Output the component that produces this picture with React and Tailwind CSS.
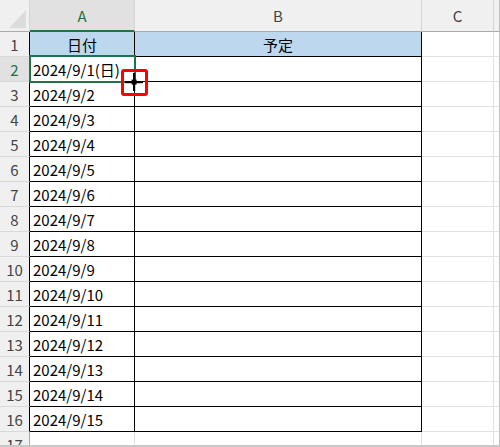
import React from 'react';

const rows = [
  '日付',
  '2024/9/1(日)',
  ...Array.from({ length: 14 }, (_, i) => `2024/9/${i + 2}`),
  '',
];

const FillCursor = () => (
  <svg width="22" height="22" viewBox="-11 -11 22 22" className="absolute -left-[1px] -top-[1px]">
    <rect x="-1" y="-9" width="2.2" height="18" fill="#000" />
    <rect x="-9" y="-1" width="18" height="2.2" fill="#000" />
    <rect x="-2.4" y="-2.4" width="5" height="5" fill="#000" />
  </svg>
);

const App = () => {
  return (
    <div
      className="w-[500px] h-[447px] overflow-hidden bg-white border-b-2 border-[#c8c8c8]"
      style={{ fontFamily: '"Noto Sans CJK JP", "Noto Sans", sans-serif' }}
    >
      <div className="grid grid-cols-[30px_105px_287px_72px_6px] grid-rows-[32px_repeat(17,25px)] text-[15px] leading-none">
        {/* header row */}
        <div className="relative bg-[#f0f0f0] border-r border-b border-r-[#d4d4d4] border-b-[#ababab]">
          <svg width="30" height="32" className="absolute left-0 top-0">
            <polygon points="9,28 26,28 26,10" fill="#dcdcdc" />
          </svg>
        </div>
        <div className="flex items-center justify-center bg-[#e1e1e1] border-r border-r-[#d4d4d4] border-b-2 border-b-[#217346] text-[#217346]">
          A
        </div>
        <div className="flex items-center justify-center bg-[#f0f0f0] border-r border-b border-r-[#d4d4d4] border-b-[#ababab] text-[#444]">
          B
        </div>
        <div className="flex items-center justify-center bg-[#f0f0f0] border-r border-b border-r-[#d4d4d4] border-b-[#ababab] text-[#444]">
          C
        </div>
        <div className="bg-[#f0f0f0] border-r border-b border-r-[#c0c0c0] border-b-[#ababab]" />

        {rows.map((text, i) => {
          const n = i + 1;
          const inTable = n <= 16;
          const selected = n === 2;
          const isHead = n === 1;
          return (
            <React.Fragment key={n}>
              <div
                className={`flex items-center justify-center border-b border-b-[#d9d9d9] border-r ${
                  inTable ? 'border-r-black' : 'border-r-[#ababab]'
                } ${selected ? 'bg-[#e1e1e1] text-[#217346]' : 'bg-[#f0f0f0] text-[#444]'}`}
              >
                {n}
              </div>
              <div
                className={`relative flex items-center border-r border-b ${
                  inTable ? 'border-black' : 'border-[#e1e1e1]'
                } ${isHead ? 'justify-center bg-[#bdd7ee]' : 'pl-[3px]'} ${selected ? 'z-10' : ''} text-black whitespace-nowrap`}
              >
                {text}
                {selected && (
                  <>
                    <div className="absolute -left-[1px] -top-[2px] w-[107px] h-[28px] border-2 border-[#217346]" />
                    <div className="absolute left-[91px] top-[12px] w-[27px] h-[27px] border-[3px] border-[#ff0000] rounded-[3px]">
                      <FillCursor />
                    </div>
                  </>
                )}
              </div>
              <div
                className={`flex items-center justify-center border-r border-b ${
                  inTable ? 'border-black' : 'border-[#e1e1e1]'
                } ${isHead ? 'bg-[#bdd7ee] text-black' : ''}`}
              >
                {isHead ? '予定' : ''}
              </div>
              <div className="border-r border-b border-[#e1e1e1]" />
              <div className="border-r border-b border-r-[#c0c0c0] border-b-[#e1e1e1]" />
            </React.Fragment>
          );
        })}
      </div>
    </div>
  );
};

export default App;
